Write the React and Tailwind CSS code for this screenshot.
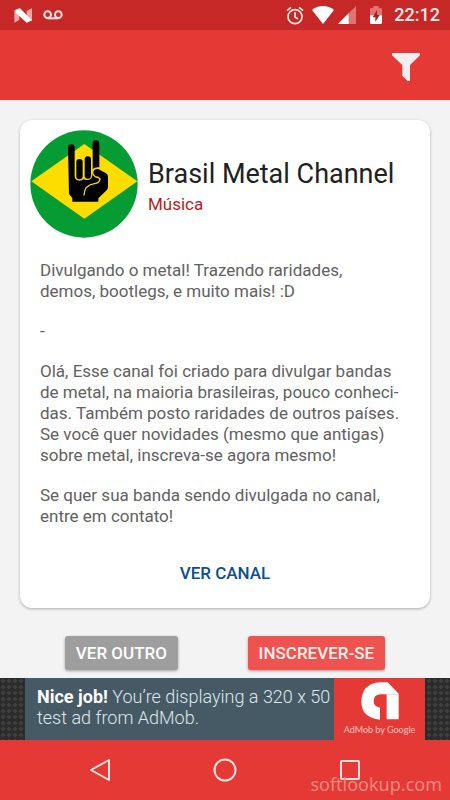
import React from 'react';

const NougatIcon = () => (
  <svg className="w-[18px] h-[15px]" viewBox="0 0 54 45" aria-hidden="true">
    <path d="M1 7 L16 1 V36 L1 44 Z M38 8 L54 1 V37 L38 44 Z" fill="#f4a3a3" />
    <path d="M5 6 L18 1 L54 37 L38 44 L5 14 Z" fill="#ffffff" />
  </svg>
);

const VoicemailIcon = () => (
  <svg className="w-5 h-[10px]" viewBox="0 0 60 30" fill="none" stroke="#ffe3e0" strokeWidth="6" aria-hidden="true">
    <circle cx="14" cy="14" r="10" />
    <circle cx="46" cy="14" r="10" />
    <path d="M14 25 H46" />
  </svg>
);

const AlarmIcon = () => (
  <svg className="w-[18px] h-[19px]" viewBox="0 0 54 57" fill="none" stroke="#ffe9e7" strokeWidth="5" aria-hidden="true">
    <circle cx="27" cy="32" r="21" />
    <path d="M27 19 V33 L36 39" />
    <path d="M3 14 L15 4 M51 14 L39 4" strokeWidth="5" />
  </svg>
);

const WifiIcon = () => (
  <svg className="w-[22px] h-[18px]" viewBox="0 0 66 54" fill="#ffffff" aria-hidden="true">
    <path d="M0 12 C18 -4 48 -4 66 12 L33 54 Z" />
  </svg>
);

const SignalIcon = () => (
  <svg className="w-[18px] h-[18px]" viewBox="0 0 54 54" aria-hidden="true">
    <path d="M0 54 L54 0 V54 Z" fill="#e27373" />
    <path d="M0 54 L32 22 V54 Z" fill="#ffffff" />
  </svg>
);

const BatteryIcon = () => (
  <svg className="w-3 h-[18px]" viewBox="0 0 36 54" aria-hidden="true">
    <path d="M10 0 H26 V6 H32 Q36 6 36 10 V30 H0 V10 Q0 6 4 6 H10 Z" fill="#e27373" />
    <path d="M0 28 H36 V50 Q36 54 32 54 H4 Q0 54 0 50 Z" fill="#ffffff" />
    <path d="M21 12 L8 34 H16 V48 L29 27 H21 Z" fill="#a81f1f" />
  </svg>
);

const FilterIcon = () => (
  <svg className="w-7 h-7" viewBox="0 0 84 84" fill="#f0eeee" aria-hidden="true">
    <path d="M0 0 H84 V7 L54 36 V84 H47 L31 69 V36 L0 7 Z" />
  </svg>
);

const ChannelAvatar = () => (
  <svg className="w-[108px] h-[108px] shrink-0" viewBox="60 59 324 324" role="img" aria-label="Brasil Metal Channel">
    <circle cx="222" cy="221" r="161" fill="#069c34" />
    <path d="M64 213 L223 101 L382 213 L223 325 Z" fill="#fddc00" />
    <path
      d="M174 112 Q174 102 184 102 Q194 102 194 112 V198 Q196 211 208 211 Q218 211 221 206 Q226 210 234 209 Q245 207 247 196 V184 Q250 173 263 175 L287 188 Q294 191 294 199 V230 Q294 235 290 240 L265 264 V274 H187 V263 L177 251 Z"
      fill="#000000"
    />
    <path d="M222 254 C223 232 238 222 254 220 Q268 218 270 207 Q268 201 258 200 Q247 194 248 184 Q251 172 266 174" fill="none" stroke="#fddc00" strokeWidth="4" strokeLinecap="round" />
    <rect x="199" y="146" width="19" height="61" rx="9" fill="#000000" />
    <rect x="224" y="138" width="19" height="67" rx="9" fill="#000000" />
    <path d="M248 100 Q248 90 258 90 Q268 90 268 100 V171 Q254 169 248 177 Z" fill="#000000" />
  </svg>
);

const AdmobLogo = () => (
  <svg className="w-[38px] h-[38px]" viewBox="0 0 112 114" aria-hidden="true">
    <path d="M57 1 H79 L112 35 V112 H76 V37 H56 Q37 39 37 58 Q37 74 56 77 V113 Q0 108 0 58 Q2 4 57 1 Z" fill="#ffffff" />
    <path d="M76 37 H112" stroke="#d5cccc" strokeWidth="2" />
  </svg>
);

const StatusBar = () => (
  <div className="flex items-center justify-between h-[30px] pl-[14px] pr-[10px] bg-[#c62828]">
    <div className="flex items-center gap-[11px]">
      <NougatIcon />
      <VoicemailIcon />
    </div>
    <div className="flex items-center">
      <AlarmIcon />
      <div className="flex items-center gap-1 ml-2">
        <WifiIcon />
        <SignalIcon />
      </div>
      <div className="ml-[14px] mr-3">
        <BatteryIcon />
      </div>
      <span className="text-lg font-medium text-[#ffe9e7]">22:12</span>
    </div>
  </div>
);

const ChannelCard = () => (
  <article className="rounded-xl bg-white px-5 pt-[10px] pb-5 shadow-[0_1px_3px_rgba(0,0,0,0.3)]">
    <header className="flex items-center gap-[10px] -ml-[10px] -mr-[10px]">
      <ChannelAvatar />
      <div className="pt-2">
        <h1 className="text-[27px] leading-8 text-[#212121] whitespace-nowrap">Brasil Metal Channel</h1>
        <p className="text-[17px] leading-7 text-[#b71c1c]">Música</p>
      </div>
    </header>

    <div className="flex flex-col gap-[19px] mt-[22px] text-[17px] leading-[21px] text-[#616161] whitespace-nowrap">
      <p>
        Divulgando o metal! Trazendo raridades,<br />
        demos, bootlegs, e muito mais! :D
      </p>
      <p>-</p>
      <p>
        Olá, Esse canal foi criado para divulgar bandas<br />
        de metal, na maioria brasileiras, pouco conheci-<br />
        das. Também posto raridades de outros países.<br />
        Se você quer novidades (mesmo que antigas)<br />
        sobre metal, inscreva-se agora mesmo!
      </p>
      <p>
        Se quer sua banda sendo divulgada no canal,<br />
        entre em contato!
      </p>
    </div>

    <div className="flex justify-center mt-8 pb-px">
      <a href="#canal" className="text-[17px] leading-7 font-medium text-[#0d4f92]">VER CANAL</a>
    </div>
  </article>
);

const AdBanner = () => (
  <aside className="flex justify-center h-[62px] bg-[#2c2c2c] bg-[radial-gradient(#3e3e3e_2px,transparent_2px)] bg-[size:6px_6px]">
    <div className="flex w-full max-w-[400px]">
      <p className="flex-1 pl-3 pt-2 bg-[#465a65] text-lg leading-[21px] font-light text-[#dfe8ec] whitespace-nowrap">
        <strong className="font-bold text-white">Nice job!</strong> You’re displaying a 320 x 50<br />
        test ad from AdMob.
      </p>
      <div className="flex flex-col items-center w-[91px] pt-1 bg-[#e53935]">
        <AdmobLogo />
        <span className="font-[Lato,sans-serif] text-[9px] leading-5 text-[#ffc4c0] whitespace-nowrap">AdMob by Google</span>
      </div>
    </div>
  </aside>
);

const NavBar = () => (
  <nav className="relative flex items-center justify-center gap-[102px] h-[60px] bg-[#e53935]">
    <button type="button" aria-label="Voltar">
      <svg className="w-[22px] h-6" viewBox="0 0 22 24" fill="none" stroke="#ffe3e0" strokeWidth="2" strokeLinejoin="round">
        <path d="M20 2 V22 L2 12 Z" />
      </svg>
    </button>
    <button type="button" aria-label="Início">
      <svg className="w-6 h-6" viewBox="0 0 24 24" fill="none" stroke="#ffe3e0" strokeWidth="2">
        <circle cx="12" cy="12" r="10.500" />
      </svg>
    </button>
    <button type="button" aria-label="Recentes">
      <svg className="w-[22px] h-[22px]" viewBox="0 0 22 22" fill="none" stroke="#ffe3e0" strokeWidth="2">
        <rect x="2" y="2" width="18" height="18" rx="1" />
      </svg>
    </button>
    <span className="absolute right-2 bottom-1 font-['Noto_Sans',sans-serif] text-lg leading-6 text-[#ef8783]">softlookup.com</span>
  </nav>
);

const App = () => {
  return (
    <div className="flex flex-col min-h-screen bg-[#f3f3f3] font-[Roboto,sans-serif]">
      <StatusBar />
      <header className="flex items-center justify-end h-[70px] pr-[30px] pt-1 bg-[#e53935]">
        <button type="button" aria-label="Filtrar">
          <FilterIcon />
        </button>
      </header>

      <main className="flex-1 px-5 pt-5">
        <ChannelCard />
        <div className="flex justify-around mt-7 pb-2 px-[10px] text-[17px] leading-[34px] font-medium">
          <button type="button" className="px-[11px] rounded-[3px] bg-[#9e9e9e] text-white shadow-[0_1px_3px_rgba(0,0,0,0.35)]">VER OUTRO</button>
          <button type="button" className="px-[11px] rounded-[3px] bg-[#ef5350] text-[#fff0ee] shadow-[0_1px_3px_rgba(0,0,0,0.35)]">INSCREVER-SE</button>
        </div>
      </main>

      <AdBanner />
      <NavBar />
    </div>
  );
};

export default App;
